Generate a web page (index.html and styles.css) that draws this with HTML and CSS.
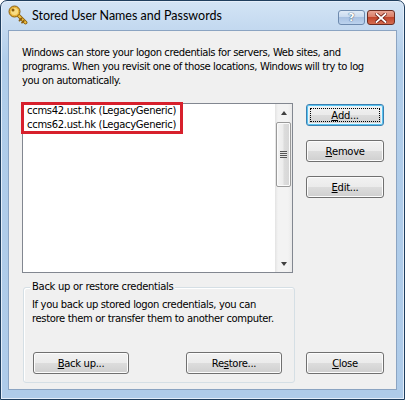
FILE: index.html
```html
<!DOCTYPE html>
<html>
<head>
<meta charset="utf-8">
<title>Stored User Names and Passwords</title>
<link rel="stylesheet" href="styles.css">
</head>
<body>
<div class="window">
  <div class="titlebar">
    <svg class="key" width="20" height="20" viewBox="0 0 20 20">
      <path d="M9 9 L17.5 17.5" stroke="#8a5d0c" stroke-width="3.8" stroke-linecap="round"/>
      <path d="M9 9 L17.5 17.5" stroke="#f0c040" stroke-width="2" stroke-linecap="round"/>
      <path d="M13.5 13.5 L11.5 15.5 M15.8 15.8 L14 17.6" stroke="#8a5d0c" stroke-width="1.8" stroke-linecap="round"/>
      <circle cx="6.5" cy="6.5" r="5.5" fill="#e9b53a" stroke="#8a5d0c" stroke-width="1"/>
      <circle cx="6.5" cy="6.5" r="3.6" fill="#f8dc84"/>
      <circle cx="5" cy="5" r="1.5" fill="#8a5d0c"/>
    </svg>
    <span class="title">Stored User Names and Passwords</span>
    <div class="caption-btns">
      <div class="cbtn help">?</div>
      <div class="cbtn close">
        <svg width="12" height="10" viewBox="0 0 12 10">
          <path d="M1.5 1 L10.5 9 M10.5 1 L1.5 9" stroke="#6a1a10" stroke-width="3.4" stroke-linecap="square"/>
          <path d="M1.5 1 L10.5 9 M10.5 1 L1.5 9" stroke="#ffffff" stroke-width="1.8" stroke-linecap="square"/>
        </svg>
      </div>
    </div>
  </div>
  <div class="client">
    <p class="desc">Windows can store your logon credentials for servers, Web sites, and<br>programs. When you revisit one of those locations, Windows will try to log<br>you on automatically.</p>
    <div class="layout">
      <div class="listbox">
        <div class="items">
          <div class="item">ccms42.ust.hk (LegacyGeneric)</div>
          <div class="item">ccms62.ust.hk (LegacyGeneric)</div>
          <div class="highlight"></div>
        </div>
        <div class="scrollbar">
          <div class="arrow up"></div>
          <div class="thumb"><span class="grip"></span></div>
          <div class="track"></div>
          <div class="arrow down"></div>
        </div>
      </div>
      <div class="side-btns">
        <div class="btn default"><span class="focus"><u>A</u>dd...</span></div>
        <div class="btn"><u>R</u>emove</div>
        <div class="btn"><u>E</u>dit...</div>
      </div>
      <div class="group">
        <span class="group-title">Back up or restore credentials</span>
        <p class="group-text">If you back up stored logon credentials, you can<br>restore them or transfer them to another computer.</p>
        <div class="group-btns">
          <div class="btn wide"><u>B</u>ack up...</div>
          <div class="btn wide">Re<u>s</u>tore...</div>
        </div>
      </div>
      <div class="close-cell">
        <div class="btn"><u>C</u>lose</div>
      </div>
    </div>
  </div>
</div>
</body>
</html>
```
FILE: styles.css
```css
* { box-sizing: border-box; }
html, body { margin: 0; padding: 0; }
body {
  width: 405px;
  height: 400px;
  background: #ffffff;
  overflow: hidden;
}
.window {
  width: 405px;
  height: 400px;
  border: 1px solid #1f3e5e;
  border-radius: 7px 7px 0 0;
  background: linear-gradient(to bottom, #d3e4f5 0px, #c2d8ef 30px, #b0cdea 60px, #aecbe9 100%);
  display: flex;
  flex-direction: column;
  box-shadow: inset 0 0 0 1px #e4eefa;
}
.titlebar {
  height: 29px;
  display: flex;
  align-items: flex-start;
  padding-left: 7px;
  padding-right: 9px;
  flex: none;
}
.key { flex: none; margin-top: 4px; }
.title {
  margin-left: 4px;
  margin-top: 7px;
  font-family: Lato, "Noto Sans", sans-serif;
  font-size: 12.5px;
  line-height: 16px;
  color: #000;
}
.caption-btns {
  margin-left: auto;
  display: flex;
  gap: 2px;
  margin-top: 9px;
}
.cbtn {
  width: 27px;
  height: 15px;
  border-radius: 3px;
  display: flex;
  align-items: center;
  justify-content: center;
}
.help {
  border: 1px solid #6d8aae;
  background: linear-gradient(to bottom, #e0ebf7 0%, #c7d9ee 50%, #a9c2e2 50%, #bcd3ee 100%);
  font-family: "DejaVu Sans", sans-serif;
  font-weight: bold;
  font-size: 11px;
  color: #ffffff;
  text-shadow: 0 0 1px #33506f, 0 0 1px #33506f;
}
.close {
  width: 28px;
  border: 1px solid #6b2d22;
  background: linear-gradient(to bottom, #e8a493 0%, #d97b64 50%, #c1452b 50%, #d56d50 100%);
}
.client {
  flex: 1;
  margin: 0 7px 9px 7px;
  background: #f0f0f0;
  border: 1px solid #8ba4c2;
  padding: 15px 12px 0 13px;
  font-family: "DejaVu Sans", sans-serif;
  font-size: 10px;
  letter-spacing: -0.3px;
  color: #000;
}
.desc {
  margin: 0;
  line-height: 14px;
  white-space: nowrap;
  letter-spacing: -0.4px;
}
.layout {
  margin-top: 15px;
  display: grid;
  grid-template-columns: 273px 78px;
  grid-template-rows: 170px auto;
  column-gap: 11px;
  row-gap: 14px;
}
.listbox {
  width: 271px;
  height: 170px;
  border: 1px solid #828790;
  background: #ffffff;
  display: flex;
  position: relative;
}
.items {
  flex: 1;
  padding: 0 0 0 4px;
  position: relative;
  line-height: 14px;
}
.item { white-space: nowrap; }
.highlight {
  position: absolute;
  left: -2px;
  top: -2px;
  width: 162px;
  height: 32px;
  border: 3px solid #d7202c;
}
.scrollbar {
  width: 17px;
  display: flex;
  flex-direction: column;
  background: linear-gradient(to right, #e3e3e3 0px, #f3f3f3 3px, #f3f3f3 13px, #e9e9e9 17px);
}
.arrow {
  height: 17px;
  display: flex;
  align-items: center;
  justify-content: center;
  flex: none;
}
.arrow::before {
  content: "";
  width: 0;
  height: 0;
  border-left: 3.5px solid transparent;
  border-right: 3.5px solid transparent;
}
.up::before { border-bottom: 4px solid #404040; }
.down::before { border-top: 4px solid #404040; }
.thumb {
  height: 65px;
  margin: 1px 1px 0 1px;
  border: 1px solid #9a9a9a;
  border-radius: 2px;
  background: linear-gradient(to right, #f4f4f4 0%, #ececec 45%, #dcdcdc 55%, #d6d6d6 100%);
  box-shadow: inset 0 0 0 1px #fbfbfb;
  display: flex;
  align-items: center;
  justify-content: center;
  flex: none;
}
.grip {
  width: 7px;
  height: 7px;
  background: repeating-linear-gradient(to bottom, #555555 0px, #555555 1px, #e6e6e6 1px, #e6e6e6 2px);
}
.track { flex: 1; }
.side-btns {
  display: flex;
  flex-direction: column;
  gap: 14px;
  padding-top: 1px;
}
.btn {
  height: 22px;
  width: 78px;
  border: 1px solid #707070;
  border-radius: 3px;
  background: linear-gradient(to bottom, #f2f2f2 0%, #ebebeb 50%, #dddddd 50%, #cfcfcf 100%);
  box-shadow: inset 0 0 0 1px #fcfcfc;
  display: flex;
  align-items: center;
  justify-content: center;
  font-family: "DejaVu Sans", sans-serif;
  font-size: 10px;
  color: #000;
  white-space: nowrap;
}
.btn u { text-underline-offset: 1px; }
.btn.default {
  border-color: #3c7fb1;
  box-shadow: inset 0 0 0 1px #58c4f0, inset 0 0 0 2px #e8f6fd;
  padding: 3px;
}
.focus {
  flex: 1;
  align-self: stretch;
  border: 1px dotted #000;
  display: flex;
  align-items: center;
  justify-content: center;
}
.btn.wide { width: 96px; }
.group {
  position: relative;
  margin-left: 1px;
  width: 272px;
  border: 1px solid #d5dfe5;
  border-radius: 3px;
  padding: 10px 12px 8px 8px;
  box-shadow: 1px 1px 0 #ffffff inset;
}
.group-title {
  position: absolute;
  left: 6px;
  top: -8px;
  padding: 0 2px;
  background: #f0f0f0;
  line-height: 14px;
  white-space: nowrap;
}
.group-text {
  margin: 0;
  line-height: 14px;
  white-space: nowrap;
  letter-spacing: -0.35px;
}
.group-btns {
  margin-top: 26px;
  margin-left: 1px;
  display: flex;
  justify-content: space-between;
}
.close-cell {
  align-self: end;
  margin-bottom: 9px;
}
```
